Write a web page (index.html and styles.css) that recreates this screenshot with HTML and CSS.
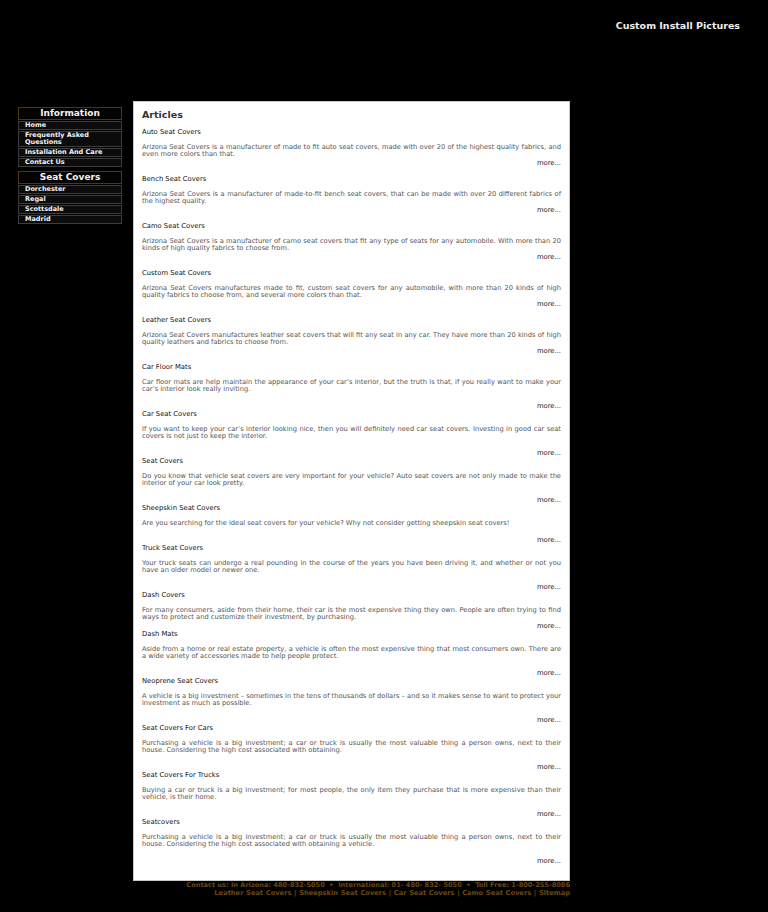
FILE: index.html
```html
<!DOCTYPE html>
<html>
<head>
<meta charset="utf-8">
<title>Articles</title>
<link rel="stylesheet" href="styles.css">
</head>
<body>
<div class="top">
  <a class="top-link" href="#">Custom Install Pictures</a>
</div>
<div class="wrap">
  <div class="sidebar">
    <div class="side-head">Information</div>
    <a class="side-item" href="#">Home</a>
    <a class="side-item" href="#">Frequently Asked Questions</a>
    <a class="side-item" href="#">Installation And Care</a>
    <a class="side-item" href="#">Contact Us</a>
    <div class="side-head second">Seat Covers</div>
    <a class="side-item" href="#">Dorchester</a>
    <a class="side-item" href="#">Regal</a>
    <a class="side-item" href="#">Scottsdale</a>
    <a class="side-item" href="#">Madrid</a>
  </div>
  <div class="content">
    <h1 class="heading">Articles</h1>

    <div class="article">
      <div class="title">Auto Seat Covers</div>
      <p class="body">Arizona Seat Covers is a manufacturer of made to fit auto seat covers, made with over 20 of the highest quality fabrics, and even more colors than that.</p>
      <div class="more"><a href="#">more...</a></div>
    </div>
    <div class="article">
      <div class="title">Bench Seat Covers</div>
      <p class="body">Arizona Seat Covers is a manufacturer of made-to-fit bench seat covers, that can be made with over 20 different fabrics of the highest quality.</p>
      <div class="more"><a href="#">more...</a></div>
    </div>
    <div class="article">
      <div class="title">Camo Seat Covers</div>
      <p class="body">Arizona Seat Covers is a manufacturer of camo seat covers that fit any type of seats for any automobile. With more than 20 kinds of high quality fabrics to choose from.</p>
      <div class="more"><a href="#">more...</a></div>
    </div>
    <div class="article">
      <div class="title">Custom Seat Covers</div>
      <p class="body">Arizona Seat Covers manufactures made to fit, custom seat covers for any automobile, with more than 20 kinds of high quality fabrics to choose from, and several more colors than that.</p>
      <div class="more"><a href="#">more...</a></div>
    </div>
    <div class="article">
      <div class="title">Leather Seat Covers</div>
      <p class="body">Arizona Seat Covers manufactures leather seat covers that will fit any seat in any car. They have more than 20 kinds of high quality leathers and fabrics to choose from.</p>
      <div class="more"><a href="#">more...</a></div>
    </div>
    <div class="article spaced">
      <div class="title">Car Floor Mats</div>
      <p class="body">Car floor mats are help maintain the appearance of your car’s interior, but the truth is that, if you really want to make your car’s interior look really inviting.</p>
      <div class="more"><a href="#">more...</a></div>
    </div>
    <div class="article spaced">
      <div class="title">Car Seat Covers</div>
      <p class="body">If you want to keep your car’s interior looking nice, then you will definitely need car seat covers. Investing in good car seat covers is not just to keep the interior.</p>
      <div class="more"><a href="#">more...</a></div>
    </div>
    <div class="article spaced">
      <div class="title">Seat Covers</div>
      <p class="body">Do you know that vehicle seat covers are very important for your vehicle? Auto seat covers are not only made to make the interior of your car look pretty.</p>
      <div class="more"><a href="#">more...</a></div>
    </div>
    <div class="article spaced">
      <div class="title">Sheepskin Seat Covers</div>
      <p class="body">Are you searching for the ideal seat covers for your vehicle? Why not consider getting sheepskin seat covers!</p>
      <div class="more"><a href="#">more...</a></div>
    </div>
    <div class="article spaced">
      <div class="title">Truck Seat Covers</div>
      <p class="body">Your truck seats can undergo a real pounding in the course of the years you have been driving it, and whether or not you have an older model or newer one.</p>
      <div class="more"><a href="#">more...</a></div>
    </div>
    <div class="article tight">
      <div class="title">Dash Covers</div>
      <p class="body">For many consumers, aside from their home, their car is the most expensive thing they own. People are often trying to find ways to protect and customize their investment, by purchasing.</p>
      <div class="more"><a href="#">more...</a></div>
    </div>
    <div class="article spaced">
      <div class="title">Dash Mats</div>
      <p class="body">Aside from a home or real estate property, a vehicle is often the most expensive thing that most consumers own. There are a wide variety of accessories made to help people protect.</p>
      <div class="more"><a href="#">more...</a></div>
    </div>
    <div class="article spaced">
      <div class="title">Neoprene Seat Covers</div>
      <p class="body">A vehicle is a big investment – sometimes in the tens of thousands of dollars – and so it makes sense to want to protect your investment as much as possible.</p>
      <div class="more"><a href="#">more...</a></div>
    </div>
    <div class="article spaced">
      <div class="title">Seat Covers For Cars</div>
      <p class="body">Purchasing a vehicle is a big investment; a car or truck is usually the most valuable thing a person owns, next to their house. Considering the high cost associated with obtaining.</p>
      <div class="more"><a href="#">more...</a></div>
    </div>
    <div class="article spaced">
      <div class="title">Seat Covers For Trucks</div>
      <p class="body">Buying a car or truck is a big investment; for most people, the only item they purchase that is more expensive than their vehicle, is their home.</p>
      <div class="more"><a href="#">more...</a></div>
    </div>
    <div class="article spaced last">
      <div class="title">Seatcovers</div>
      <p class="body">Purchasing a vehicle is a big investment; a car or truck is usually the most valuable thing a person owns, next to their house. Considering the high cost associated with obtaining a vehicle.</p>
      <div class="more"><a href="#">more...</a></div>
    </div>
  </div>
</div>
<div class="footer">
  <div class="foot-line">Contact us: In Arizona: 480-832-5050 &nbsp;•&nbsp; International: 01- 480- 832- 5050 &nbsp;•&nbsp; Toll Free: 1-800-255-8086</div>
  <div class="foot-line links"><a href="#">Leather Seat Covers</a> | <a href="#">Sheepskin Seat Covers</a> | <a href="#">Car Seat Covers</a> | <a href="#">Camo Seat Covers</a> | <a href="#">Sitemap</a></div>
</div>
</body>
</html>
```
FILE: styles.css
```css
html, body {
  margin: 0;
  padding: 0;
  background: #000;
}
body {
  font-family: "DejaVu Sans", Verdana, sans-serif;
  color: #fff;
}
a {
  text-decoration: none;
  color: inherit;
}
.top {
  height: 101px;
  box-sizing: border-box;
  display: flex;
  justify-content: flex-end;
  align-items: flex-start;
  padding: 20px 28px 0 0;
}
.top-link {
  font-size: 9.5px;
  font-weight: bold;
  color: #eeeeee;
  line-height: 12px;
}
.wrap {
  display: flex;
  align-items: flex-start;
  margin-left: 18px;
  width: 552px;
}
.sidebar {
  width: 104px;
  flex: none;
  margin-top: 6px;
  display: flex;
  flex-direction: column;
}
.side-head {
  border: 1px solid #4f3512;
  background: #050302;
  text-align: center;
  font-size: 9px;
  font-weight: bold;
  line-height: 11px;
  color: #f2f2f2;
}
.side-head.second {
  margin-top: 4px;
}
.side-item {
  display: block;
  margin-top: 1px;
  border: 1px solid #3d3d3d;
  background: #0b0b0b;
  padding: 0 6px;
  font-size: 6.5px;
  font-weight: bold;
  line-height: 7px;
  color: #f4f4f4;
}
.content {
  margin-left: 11px;
  width: 437px;
  box-sizing: border-box;
  background: #fff;
  border: 1px solid #c8c8c8;
  padding: 7px 8px 7px 8px;
  color: #555;
}
.heading {
  margin: 0 0 7px 0;
  font-size: 9.5px;
  line-height: 12px;
  font-weight: bold;
  color: #333;
}
.title {
  font-size: 6.8px;
  line-height: 8px;
  color: #111;
}
.body {
  margin: 8px 0 1px 0;
  font-size: 6.7px;
  line-height: 7px;
  color: #555;
  text-align: justify;
}
.more {
  text-align: right;
  font-size: 6.8px;
  line-height: 8px;
  color: #222;
  margin-bottom: 8px;
}
.spaced .body {
  margin-bottom: 9px;
}
.spaced .more,
.tight .more {
  margin-bottom: 0;
}
.last .more {
  margin-bottom: 8px;
}
.footer {
  width: 570px;
  text-align: right;
  padding-top: 0;
}
.foot-line {
  font-size: 6.6px;
  font-weight: bold;
  line-height: 8px;
  color: #6a4812;
  white-space: nowrap;
}
.foot-line.links {
  font-size: 6.7px;
  word-spacing: 0.3px;
}
```
